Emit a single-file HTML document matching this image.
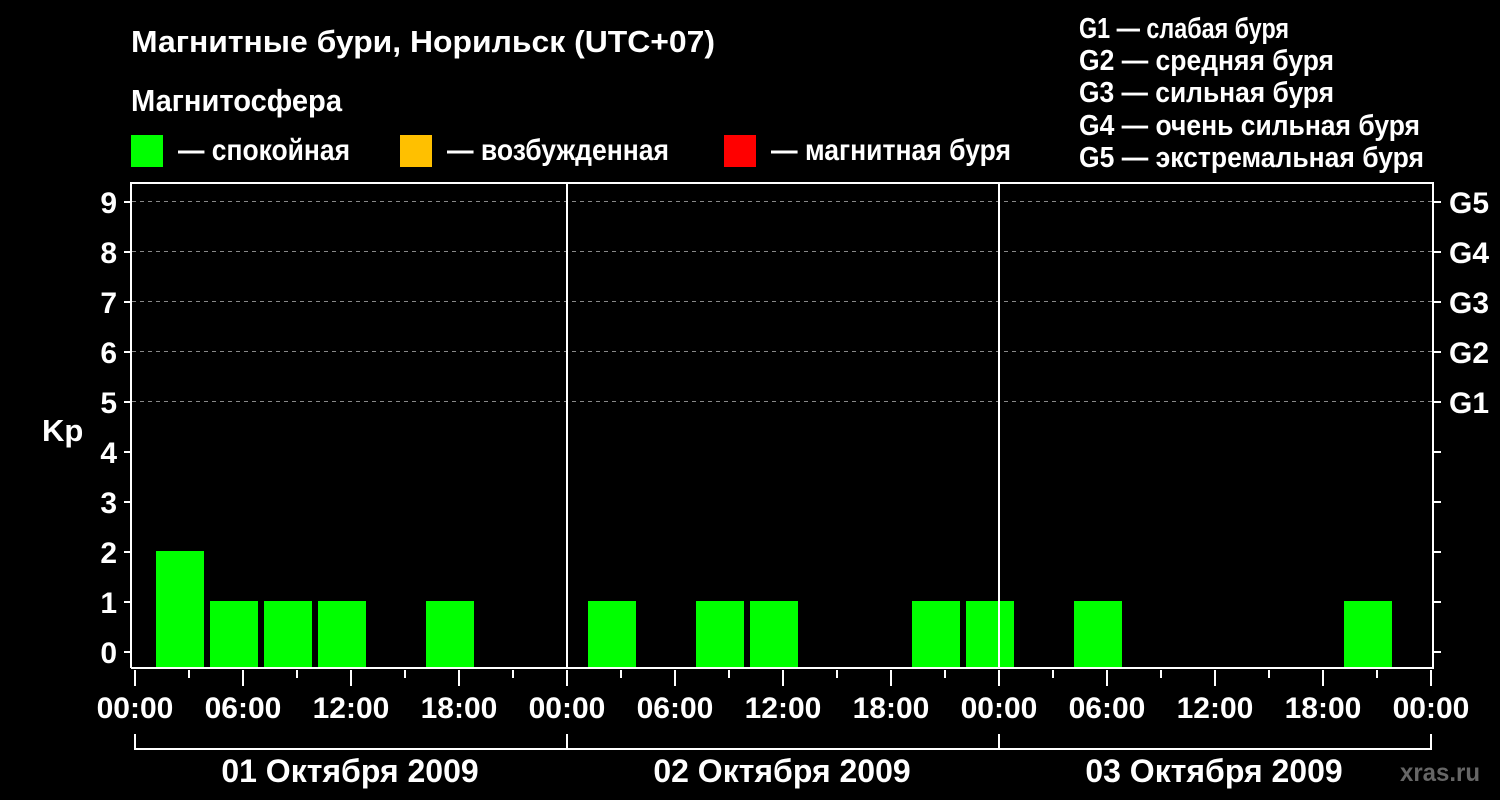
<!DOCTYPE html>
<html><head><meta charset="utf-8"><style>
html,body{margin:0;padding:0;background:#000;width:1500px;height:800px;overflow:hidden}
svg{display:block}
text{font-family:"Liberation Sans",Arial,sans-serif;font-weight:bold;fill:#fff}
</style></head><body>
<svg width="1500" height="800" viewBox="0 0 1500 800">
<rect width="1500" height="800" fill="#000"/>
<text x="131" y="52" font-size="31" textLength="584" lengthAdjust="spacingAndGlyphs">Магнитные бури, Норильск (UTC+07)</text>
<text x="131" y="111" font-size="31" textLength="211" lengthAdjust="spacingAndGlyphs">Магнитосфера</text>
<rect x="131" y="135" width="32" height="32" fill="#00ff00"/>
<text x="178" y="160" font-size="30" textLength="172" lengthAdjust="spacingAndGlyphs">— спокойная</text>
<rect x="400" y="135" width="32" height="32" fill="#ffc000"/>
<text x="447" y="160" font-size="30" textLength="222" lengthAdjust="spacingAndGlyphs">— возбужденная</text>
<rect x="724" y="135" width="32" height="32" fill="#ff0000"/>
<text x="771" y="160" font-size="30" textLength="240" lengthAdjust="spacingAndGlyphs">— магнитная буря</text>
<g font-size="29">
<text x="1079" y="38" textLength="210" lengthAdjust="spacingAndGlyphs">G1 — слабая буря</text>
<text x="1079" y="70" textLength="255" lengthAdjust="spacingAndGlyphs">G2 — средняя буря</text>
<text x="1079" y="102" textLength="255" lengthAdjust="spacingAndGlyphs">G3 — сильная буря</text>
<text x="1079" y="135" textLength="341" lengthAdjust="spacingAndGlyphs">G4 — очень сильная буря</text>
<text x="1079" y="167" textLength="345" lengthAdjust="spacingAndGlyphs">G5 — экстремальная буря</text>
</g>
<g stroke="#888" stroke-width="1" stroke-dasharray="4,4">
<line x1="132" y1="201.5" x2="1432" y2="201.5"/>
<line x1="132" y1="251.5" x2="1432" y2="251.5"/>
<line x1="132" y1="301.5" x2="1432" y2="301.5"/>
<line x1="132" y1="351.5" x2="1432" y2="351.5"/>
<line x1="132" y1="401.5" x2="1432" y2="401.5"/>
</g>
<g fill="#00ff00">
<rect x="156" y="551" width="48" height="117"/>
<rect x="210" y="601" width="48" height="67"/>
<rect x="264" y="601" width="48" height="67"/>
<rect x="318" y="601" width="48" height="67"/>
<rect x="426" y="601" width="48" height="67"/>
<rect x="588" y="601" width="48" height="67"/>
<rect x="696" y="601" width="48" height="67"/>
<rect x="750" y="601" width="48" height="67"/>
<rect x="912" y="601" width="48" height="67"/>
<rect x="966" y="601" width="48" height="67"/>
<rect x="1074" y="601" width="48" height="67"/>
<rect x="1344" y="601" width="48" height="67"/>
</g>
<g stroke="#fff" stroke-width="2" fill="none">
<path d="M131 668 V183 H1433 V668 H131"/>
<line x1="567" y1="183" x2="567" y2="668"/>
<line x1="999" y1="183" x2="999" y2="668"/>
<path d="M124 652H131M124 602H131M124 552H131M124 502H131M124 452H131M124 402H131M124 352H131M124 302H131M124 252H131M124 202H131"/>
<path d="M1433 652H1441M1433 602H1441M1433 552H1441M1433 502H1441M1433 452H1441M1433 402H1441M1433 352H1441M1433 302H1441M1433 252H1441M1433 202H1441"/>
<path d="M135 670V686M243 670V686M351 670V686M459 670V686M567 670V686M675 670V686M783 670V686M891 670V686M999 670V686M1107 670V686M1215 670V686M1323 670V686M1431 670V686"/>
<path d="M189 670V678M297 670V678M405 670V678M513 670V678M621 670V678M729 670V678M837 670V678M945 670V678M1053 670V678M1161 670V678M1269 670V678M1377 670V678"/>
<path d="M135 734V749H1431V734M567 734V749M999 734V749"/>
</g>
<g font-size="30" text-anchor="end">
<text x="117" y="663">0</text><text x="117" y="613">1</text><text x="117" y="563">2</text><text x="117" y="513">3</text><text x="117" y="463">4</text><text x="117" y="413">5</text><text x="117" y="363">6</text><text x="117" y="313">7</text><text x="117" y="263">8</text><text x="117" y="213">9</text>
</g>
<text x="42" y="441" font-size="31">Kp</text>
<g font-size="30">
<text x="1449" y="213">G5</text><text x="1449" y="263">G4</text><text x="1449" y="313">G3</text><text x="1449" y="363">G2</text><text x="1449" y="413">G1</text>
</g>
<g font-size="30" text-anchor="middle">
<text x="135" y="718">00:00</text><text x="243" y="718">06:00</text><text x="351" y="718">12:00</text><text x="459" y="718">18:00</text>
<text x="567" y="718">00:00</text><text x="675" y="718">06:00</text><text x="783" y="718">12:00</text><text x="891" y="718">18:00</text>
<text x="999" y="718">00:00</text><text x="1107" y="718">06:00</text><text x="1215" y="718">12:00</text><text x="1323" y="718">18:00</text><text x="1431" y="718">00:00</text>
</g>
<g font-size="32" text-anchor="middle">
<text x="350" y="782">01 Октября 2009</text>
<text x="782" y="782">02 Октября 2009</text>
<text x="1214" y="782">03 Октября 2009</text>
</g>
<text x="1400" y="781" font-size="25" textLength="80" lengthAdjust="spacingAndGlyphs" style="fill:#666">xras.ru</text>
</svg>
</body></html>
